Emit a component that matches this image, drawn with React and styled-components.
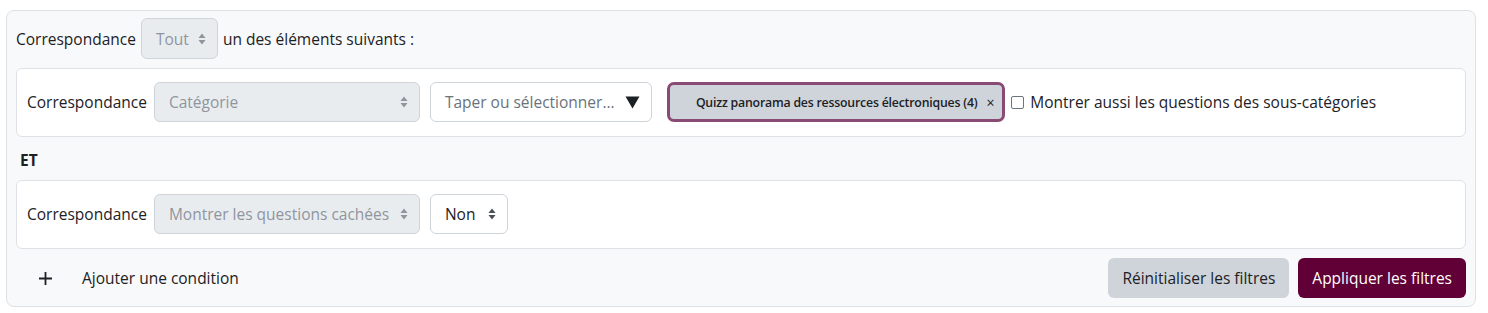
import React from 'react'
import styled, { createGlobalStyle } from 'styled-components'

const GlobalStyle = createGlobalStyle`
  html, body {
    margin: 0;
    padding: 0;
    background: #fff;
  }
  body {
    font-family: "Open Sans", "Noto Sans", "Liberation Sans", sans-serif;
    font-size: 15.5px;
    color: #1d2125;
  }
`

const Page = styled.div`
  padding: 10px 12px 7px 6px;
`

const Panel = styled.section`
  background: #f8f9fa;
  border: 1px solid #dee2e6;
  border-radius: 8px;
  padding: 7px 9px 8px 9px;
  display: flex;
  flex-direction: column;
`

const Row = styled.div`
  display: flex;
  align-items: center;
  gap: ${({ gap }) => gap || 10}px;
`

const Label = styled.span`
  white-space: nowrap;
  margin-right: ${({ mr }) => mr || 0}px;
`

const SelectBox = styled.div`
  box-sizing: border-box;
  display: flex;
  align-items: center;
  justify-content: space-between;
  gap: 8px;
  height: ${({ h }) => h || 40}px;
  width: ${({ w }) => (w ? `${w}px` : 'auto')};
  padding: 0 11px 0 14px;
  border: 1px solid #ced4da;
  border-radius: 6px;
  background: ${({ disabled }) => (disabled ? '#e9ecef' : '#fff')};
  color: ${({ disabled }) => (disabled ? '#8f959e' : '#1d2125')};
  white-space: nowrap;
`

const Placeholder = styled.span`
  color: #6a737b;
`

const Caret = ({ color }) => (
  <svg width="8" height="12" viewBox="0 0 8 12">
    <path d="M4 0.5 L7.5 5 L0.5 5 Z" fill={color} />
    <path d="M4 11.5 L7.5 7 L0.5 7 Z" fill={color} />
  </svg>
)

const DownTriangle = () => (
  <svg width="15" height="13" viewBox="0 0 15 13">
    <path d="M0.5 0.5 L14.5 0.5 L7.5 12.5 Z" fill="#1d2125" />
  </svg>
)

const Condition = styled.div`
  background: #fff;
  border: 1px solid #dee2e6;
  border-radius: 6px;
  padding: 13px 10px 14px 10px;
  margin-top: ${({ mt }) => mt || 0}px;
`

const Pill = styled.div`
  box-sizing: border-box;
  display: flex;
  align-items: center;
  gap: 9px;
  height: 40px;
  margin-left: 5px;
  padding: 0 8px 0 26px;
  background: #ced4da;
  border: 3px solid #8a4a76;
  border-radius: 7px;
  font-size: 12.3px;
  font-weight: 600;
  letter-spacing: -0.2px;
  color: #1d2125;
  white-space: nowrap;
`

const Close = styled.span`
  font-size: 14px;
  font-weight: 400;
`

const CheckLabel = styled.label`
  display: flex;
  align-items: center;
  gap: 6px;
  margin-left: -4px;
  white-space: nowrap;
`

const Checkbox = styled.span`
  box-sizing: border-box;
  width: 13px;
  height: 13px;
  border: 1px solid #6c757d;
  border-radius: 2px;
  background: #fff;
`

const Heading = styled.div`
  font-weight: 700;
  padding: 12px 0 0 4px;
  height: 43px;
  box-sizing: border-box;
`

const Footer = styled.div`
  display: flex;
  align-items: center;
  justify-content: space-between;
  margin-top: 9px;
`

const AddLink = styled.div`
  display: flex;
  align-items: center;
  gap: 29px;
  padding-left: 22px;
`

const Button = styled.button`
  font-family: inherit;
  font-size: 15.5px;
  height: 40px;
  padding: 0 14px;
  border: none;
  border-radius: 6px;
  background: ${({ primary }) => (primary ? '#600037' : '#ced4da')};
  color: ${({ primary }) => (primary ? '#fff' : '#1d2125')};
  cursor: pointer;
`

const Buttons = styled.div`
  display: flex;
  gap: 9px;
`

const Plus = () => (
  <svg width="15" height="15" viewBox="0 0 15 15">
    <path d="M7.5 1 V14 M1 7.5 H14" stroke="#1d2125" strokeWidth="1.8" />
  </svg>
)

const App = () => {
  return (
    <Page>
      <GlobalStyle />
      <Panel>
        <Row gap={5}>
          <Label>Correspondance</Label>
          <SelectBox disabled h={41} w={77}>
            Tout <Caret color="#8f959e" />
          </SelectBox>
          <Label>un des éléments suivants :</Label>
        </Row>

        <Condition mt={9}>
          <Row>
            <Label mr={-3}>Correspondance</Label>
            <SelectBox disabled w={266}>
              Catégorie <Caret color="#8f959e" />
            </SelectBox>
            <SelectBox w={222}>
              <Placeholder>Taper ou sélectionner...</Placeholder> <DownTriangle />
            </SelectBox>
            <Pill>
              Quizz panorama des ressources électroniques (4) <Close>×</Close>
            </Pill>
            <CheckLabel>
              <Checkbox />
              Montrer aussi les questions des sous-catégories
            </CheckLabel>
          </Row>
        </Condition>

        <Heading>ET</Heading>

        <Condition>
          <Row>
            <Label mr={-3}>Correspondance</Label>
            <SelectBox disabled w={266}>
              Montrer les questions cachées <Caret color="#8f959e" />
            </SelectBox>
            <SelectBox w={78}>
              Non <Caret color="#495057" />
            </SelectBox>
          </Row>
        </Condition>

        <Footer>
          <AddLink>
            <Plus />
            <span>Ajouter une condition</span>
          </AddLink>
          <Buttons>
            <Button>Réinitialiser les filtres</Button>
            <Button primary>Appliquer les filtres</Button>
          </Buttons>
        </Footer>
      </Panel>
    </Page>
  )
}

export default App
